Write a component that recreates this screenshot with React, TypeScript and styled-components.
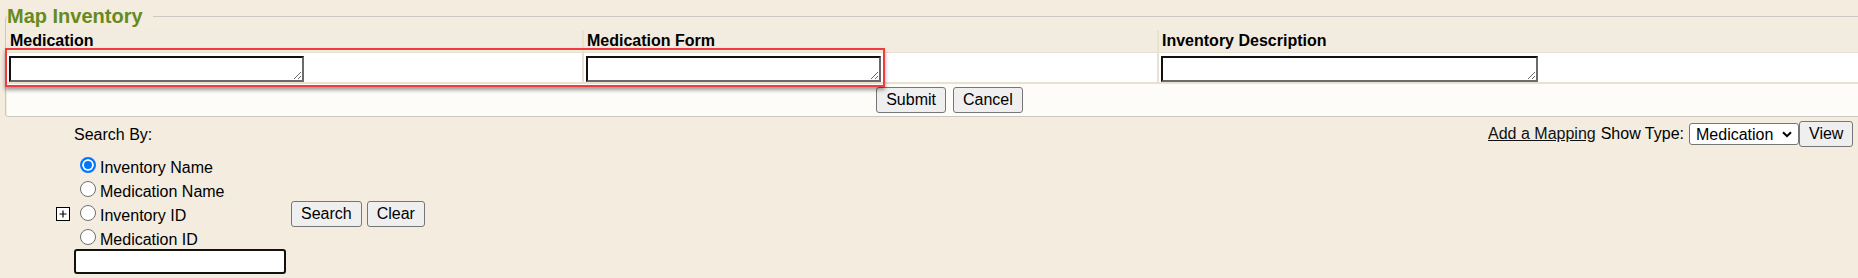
import React from "react";
import styled, { createGlobalStyle } from "styled-components";

const GlobalStyle = createGlobalStyle`
  html, body {
    margin: 0;
    background: #f3ecdf;
    overflow: hidden;
  }
  body {
    font-family: "Liberation Sans", Arial, sans-serif;
    font-size: 16px;
    color: #000;
  }
`;

const columns = [
  { title: "Medication", field: 295 },
  { title: "Medication Form", field: 295 },
  { title: "Inventory Description", field: 377 },
];

const searchOptions = ["Inventory Name", "Medication Name", "Inventory ID", "Medication ID"];

const App = () => {
  return (
    <>
      <GlobalStyle />
      <Page>
        <Fieldset>
          <Legend>Map Inventory</Legend>
          <FormGrid>
            {columns.map((c) => (
              <HeadCell key={c.title}>{c.title}</HeadCell>
            ))}
            {columns.map((c) => (
              <FieldCell key={c.title}>
                <Field $w={c.field} rows={1} />
              </FieldCell>
            ))}
            <ActionRow>
              <Btn>Submit</Btn>
              <Btn>Cancel</Btn>
            </ActionRow>
          </FormGrid>
        </Fieldset>

        <Lower>
          <SearchGrid>
            <SearchLabel>Search By:</SearchLabel>
            {searchOptions.map((opt, i) => (
              <RadioRow key={opt}>
                <Radio type="radio" name="searchBy" defaultChecked={i === 0} />
                {opt}
              </RadioRow>
            ))}
            <Expand>
              <svg width="14" height="14" viewBox="0 0 14 14">
                <rect x="0.5" y="0.5" width="13" height="13" fill="#fff" stroke="#000" />
                <path d="M3.5 7h7M7 3.5v7" stroke="#000" strokeWidth="1.2" />
              </svg>
            </Expand>
            <SearchButtons>
              <Btn>Search</Btn>
              <Btn>Clear</Btn>
            </SearchButtons>
            <SearchBox type="text" />
          </SearchGrid>

          <RightTools>
            <MapLink href="#">Add a Mapping</MapLink>
            <ToolLabel>Show Type:</ToolLabel>
            <SelectWrap>
              <TypeSelect defaultValue="Medication">
                <option>Medication</option>
                <option>Inventory</option>
              </TypeSelect>
              <Chevron width="10" height="7" viewBox="0 0 10 7">
                <path d="M1 1.2l4 4 4-4" fill="none" stroke="#000" strokeWidth="2" />
              </Chevron>
            </SelectWrap>
            <ViewBtn>View</ViewBtn>
          </RightTools>
        </Lower>

        <Highlight />
      </Page>
    </>
  );
};

export default App;

const Page = styled.div`
  position: relative;
  display: flow-root;
  width: 1858px;
  height: 278px;
`;

const Fieldset = styled.fieldset`
  box-sizing: border-box;
  width: 1889px;
  min-width: 0;
  margin: 5px 0 0 5px;
  padding: 2px 1px 0 1px;
  border: 1px solid #cbc8c1;
  border-radius: 3px;
`;

const Legend = styled.legend`
  padding: 0 10px 0 0;
  font-weight: bold;
  font-size: 20px;
  line-height: 23px;
  color: #668a22;
`;

const FormGrid = styled.div`
  display: grid;
  grid-template-columns: 575px 573px 733px;
  column-gap: 2px;
  row-gap: 1px;
  background: #e9e2d0;
`;

const HeadCell = styled.div`
  background: #f1ecdf;
  padding: 2px 3px;
  line-height: 18px;
  font-weight: bold;
`;

const FieldCell = styled.div`
  background: #fff;
  padding: 3px 0 0 2px;
`;

const Field = styled.textarea<{ $w: number }>`
  display: block;
  box-sizing: border-box;
  width: ${(p) => p.$w}px;
  height: 26px;
  margin: 0;
  padding: 1px 2px;
  border: 2px solid;
  border-color: #111 #6a6a6a #6a6a6a #111;
  background: #fff;
  font: 13px "Liberation Sans", Arial, sans-serif;
`;

const ActionRow = styled.div`
  grid-column: 1 / -1;
  margin-top: 1px;
  background: #fdfcf9;
  display: flex;
  justify-content: center;
  gap: 7px;
  padding: 3px 0;
`;

const Btn = styled.button`
  box-sizing: border-box;
  height: 26px;
  padding: 0 9px;
  background: #efefef;
  border: 1px solid #767676;
  border-radius: 3px;
  font: 16px "Liberation Sans", Arial, sans-serif;
  color: #000;
`;

const Lower = styled.div`
  box-sizing: border-box;
  width: 1858px;
  display: flex;
  justify-content: space-between;
  align-items: flex-start;
  padding-right: 5px;
`;

const SearchGrid = styled.div`
  display: grid;
  grid-template-columns: 18px 217px auto;
  padding: 9px 0 0 56px;
`;

const SearchLabel = styled.div`
  grid-column: 2;
  line-height: 18px;
  margin-bottom: 12px;
`;

const RadioRow = styled.label`
  grid-column: 2;
  line-height: 24px;
  white-space: nowrap;
`;

const Radio = styled.input`
  appearance: none;
  box-sizing: border-box;
  width: 16px;
  height: 16px;
  margin: 0 4px 0 6px;
  border: 1px solid #6f6f6f;
  border-radius: 50%;
  background: #fff;
  vertical-align: baseline;

  &:checked {
    border: 2px solid #0075ff;
    background: #0075ff;
    box-shadow: inset 0 0 0 2px #fff;
  }
`;

const Expand = styled.div`
  grid-column: 1;
  grid-row: 4;
  align-self: start;
  margin-top: 3px;
  line-height: 0;
`;

const SearchButtons = styled.div`
  grid-column: 3;
  grid-row: 4;
  align-self: start;
  margin-top: -3px;
  display: flex;
  gap: 5px;
`;

const SearchBox = styled.input`
  grid-column: 2;
  grid-row: 6;
  box-sizing: border-box;
  width: 212px;
  height: 25px;
  margin: -3px 0 0 0;
  border: 2px solid #111;
  border-radius: 3px;
  background: #fff;
`;

const RightTools = styled.div`
  display: flex;
  align-items: center;
  margin-top: 4px;
`;

const MapLink = styled.a`
  color: #111;
  text-decoration: underline;
`;

const ToolLabel = styled.span`
  margin-left: 5px;
`;

const SelectWrap = styled.div`
  position: relative;
  margin-left: 5px;
  line-height: 0;
`;

const TypeSelect = styled.select`
  appearance: none;
  box-sizing: border-box;
  width: 110px;
  height: 22px;
  margin: 0;
  padding: 0 0 0 6px;
  border: 1px solid #767676;
  border-radius: 3px;
  background: #fff;
  font: 16px "Liberation Sans", Arial, sans-serif;
  color: #000;
`;

const Chevron = styled.svg`
  position: absolute;
  right: 7px;
  top: 8px;
  pointer-events: none;
`;

const ViewBtn = styled(Btn)`
  width: 54px;
`;

const Highlight = styled.div`
  position: absolute;
  left: 5px;
  top: 48px;
  width: 880px;
  height: 39px;
  box-sizing: border-box;
  border: 2px solid #f03c3c;
  box-shadow: 0 3px 4px rgba(0, 0, 0, 0.4);
  pointer-events: none;
`;
